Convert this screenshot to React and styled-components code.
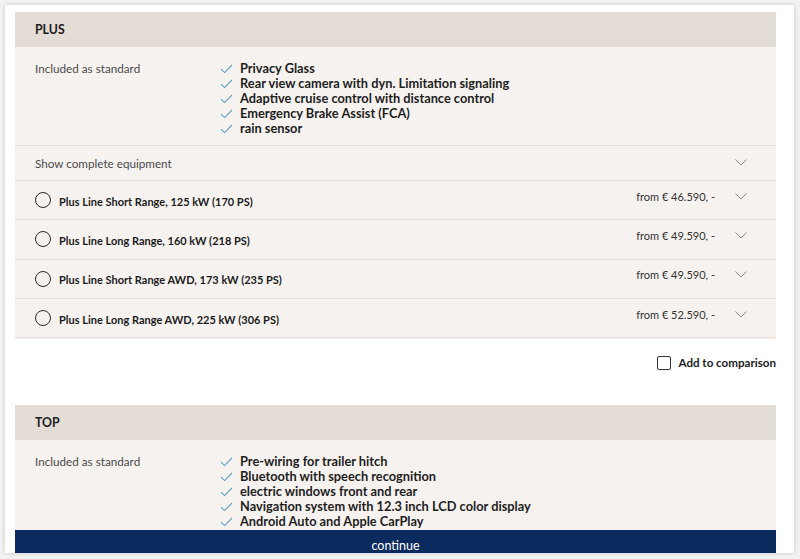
import React from 'react'
import styled, { createGlobalStyle } from 'styled-components'

const GlobalStyle = createGlobalStyle`
  html, body {
    margin: 0;
    padding: 0;
    background: #f1f1f1;
    font-family: Lato, "Liberation Sans", sans-serif;
    color: #1c1c1c;
  }
  * { box-sizing: border-box; }
`

const plusItems = [
    'Privacy Glass',
    'Rear view camera with dyn. Limitation signaling',
    'Adaptive cruise control with distance control',
    'Emergency Brake Assist (FCA)',
    'rain sensor',
]

const topItems = [
    'Pre-wiring for trailer hitch',
    'Bluetooth with speech recognition',
    'electric windows front and rear',
    'Navigation system with 12.3 inch LCD color display',
    'Android Auto and Apple CarPlay',
]

const variants = [
    { name: 'Plus Line Short Range, 125 kW (170 PS)', price: 'from € 46.590, -' },
    { name: 'Plus Line Long Range, 160 kW (218 PS)', price: 'from € 49.590, -' },
    { name: 'Plus Line Short Range AWD, 173 kW (235 PS)', price: 'from € 49.590, -' },
    { name: 'Plus Line Long Range AWD, 225 kW (306 PS)', price: 'from € 52.590, -' },
]

const Check = () => (
    <svg width="13" height="10" viewBox="0 0 13 10" fill="none">
        <path d="M1 5.2 L4.6 8.6 L12 1" stroke="#5d9fc0" strokeWidth="1.1" />
    </svg>
)

const Chevron = () => (
    <svg width="12" height="7" viewBox="0 0 12 7" fill="none">
        <path d="M0.5 0.5 L6 6 L11.5 0.5" stroke="#8a8a8a" strokeWidth="1" />
    </svg>
)

function Features({ items }) {
    return (
        <Included>
            <IncludedLabel>Included as standard</IncludedLabel>
            <FeatureList>
                {items.map((it) => (
                    <FeatureItem key={it}>
                        <Check />
                        <span>{it}</span>
                    </FeatureItem>
                ))}
            </FeatureList>
        </Included>
    )
}

export default function App() {
    return (
        <Page>
            <GlobalStyle />
            <Card>
                <Scroll>
                    <Header>PLUS</Header>
                    <Features items={plusItems} />
                    <ShowRow>
                        <span>Show complete equipment</span>
                        <ChevronBox $lift={1}><Chevron /></ChevronBox>
                    </ShowRow>
                    {variants.map((v) => (
                        <VariantRow key={v.name}>
                            <Radio />
                            <VariantName>{v.name}</VariantName>
                            <Price>{v.price}</Price>
                            <ChevronBox $lift={8}><Chevron /></ChevronBox>
                        </VariantRow>
                    ))}
                    <CompareRow>
                        <CheckBox />
                        <span>Add to comparison</span>
                    </CompareRow>
                    <Header>TOP</Header>
                    <Features items={topItems} />
                </Scroll>
                <Continue>continue</Continue>
            </Card>
        </Page>
    )
}

const Page = styled.div`
height: 559px;
padding: 5px 6px 6px 5px;
`

const Card = styled.div`
height: 548px;
background: #fff;
box-shadow: 0 0 4px rgba(0, 0, 0, 0.18);
display: flex;
flex-direction: column;
padding: 7px 18px 0 10px;
overflow: hidden;
`

const Scroll = styled.div`
flex: 1;
overflow: hidden;
`

const Header = styled.div`
height: 35px;
background: #e4ddd5;
display: flex;
align-items: center;
padding-left: 20px;
font-size: 12.3px;
font-weight: 700;
`

const Included = styled.div`
background: #f6f2f0;
display: flex;
padding: 14px 20px 9px 20px;
border-bottom: 1px solid #e6e0dc;
`

const IncludedLabel = styled.div`
width: 185px;
font-size: 11.7px;
color: #4a4a4a;
line-height: 15px;
`

const FeatureList = styled.ul`
list-style: none;
margin: 0;
padding: 0;
`

const FeatureItem = styled.li`
display: flex;
align-items: center;
gap: 7px;
font-size: 12.8px;
font-weight: 700;
line-height: 15px;
color: #1e1e1e;
`

const ShowRow = styled.div`
height: 35px;
background: #f6f2f0;
display: flex;
align-items: center;
justify-content: space-between;
padding: 0 29px 0 20px;
font-size: 11.7px;
color: #4a4a4a;
border-bottom: 1px solid #e6e0dc;
`

const ChevronBox = styled.div`
display: flex;
align-items: center;
margin-top: ${(p) => -p.$lift}px;
`

const VariantRow = styled.div`
height: 39.3px;
background: #f6f2f0;
display: flex;
align-items: center;
padding: 0 29px 0 20px;
border-bottom: 1px solid #e6e0dc;
&:last-of-type { border-bottom: none; }
`

const Radio = styled.span`
width: 16px;
height: 16px;
border: 1.3px solid #2a2a2a;
border-radius: 50%;
margin-right: 8px;
`

const VariantName = styled.span`
flex: 1;
font-size: 11px;
font-weight: 700;
margin-top: 2px;
`

const Price = styled.span`
font-size: 11px;
color: #333;
margin-right: 20px;
margin-top: -8px;
`

const CompareRow = styled.div`
height: 67px;
background: #fff;
border-top: 1px solid #f6f2f0;
display: flex;
align-items: flex-start;
justify-content: flex-end;
gap: 7px;
padding-top: 17px;
font-size: 11.6px;
font-weight: 700;
`

const CheckBox = styled.span`
width: 14px;
height: 14px;
border: 1.3px solid #333;
border-radius: 2px;
`

const Continue = styled.div`
height: 23px;
background: #0b2a5e;
color: #fff;
font-size: 12.5px;
display: flex;
align-items: center;
justify-content: center;
padding-top: 7px;
`
